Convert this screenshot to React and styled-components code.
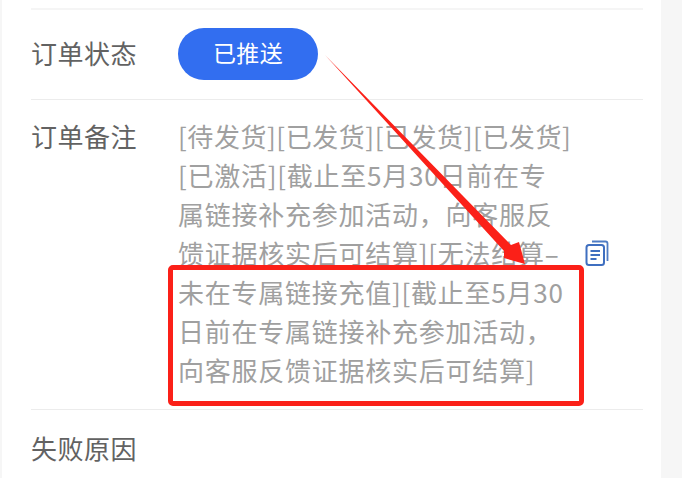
import styled, { createGlobalStyle } from "styled-components";

const GlobalStyle = createGlobalStyle`
    html, body {
        margin: 0;
        padding: 0;
        background-color: #f6f6f6;
    }
`;

export default function App() {
    return (
        <Page>
            <GlobalStyle />
            <Card>
                <TopRule />
                <StatusRow>
                    <Label>订单状态</Label>
                    <StatusPill>已推送</StatusPill>
                </StatusRow>
                <NoteRow>
                    <Label>订单备注</Label>
                    <Note>
                        <NoteLine $tight>[待发货][已发货][已发货][已发货]</NoteLine>
                        <NoteLine>[已激活][截止至5月30日前在专</NoteLine>
                        <NoteLine>属链接补充参加活动，向客服反</NoteLine>
                        <NoteLine>
                            馈证据核实后可结算][无法结算–
                            <CopyIcon viewBox="0 0 24 26" aria-hidden="true">
                                <path d="M7 1.5h13.5a2 2 0 0 1 2 2V21" fill="none" stroke="#4f7cc4" strokeWidth="1.8" />
                                <rect x="1.5" y="5" width="17.5" height="20" rx="2.5" fill="none" stroke="#3f6fc0" strokeWidth="2" />
                                <path d="M5.5 11h9.5M5.5 15h9.5M5.5 19h6" fill="none" stroke="#3f6fc0" strokeWidth="1.8" />
                            </CopyIcon>
                        </NoteLine>
                        <Highlighted>
                            <NoteLine>未在专属链接充值][截止至5月30</NoteLine>
                            <NoteLine>日前在专属链接补充参加活动，</NoteLine>
                            <NoteLine>向客服反馈证据核实后可结算]</NoteLine>
                        </Highlighted>
                    </Note>
                </NoteRow>
                <ReasonRow>
                    <Label>失败原因</Label>
                </ReasonRow>
            </Card>
            <Arrow viewBox="0 0 682 478" aria-hidden="true">
                <polygon points="325,55 511,245 519,242 525,264 504,258 504,251" fill="#fb2018" />
            </Arrow>
        </Page>
    );
}

const Page = styled.div`
    position: relative;
    height: 478px;
    width: 682px;
    overflow: hidden;
    background-color: #f6f6f6;
    font-family: "Noto Sans CJK SC", "Liberation Sans", sans-serif;
`;

const Card = styled.main`
    box-sizing: border-box;
    height: 478px;
    width: 659px;
    margin-left: 2px;
    padding: 0 18px 0 29px;
    background-color: #ffffff;
`;

const TopRule = styled.div`
    height: 8px;
    border-bottom: 2px solid #f5f5f5;
`;

const Row = styled.section`
    display: flex;
    box-sizing: border-box;
    border-bottom: 1px solid #ececec;
`;

const StatusRow = styled(Row)`
    align-items: center;
    height: 90px;
`;

const NoteRow = styled(Row)`
    align-items: flex-start;
    height: 310px;
    padding-top: 16px;
`;

const ReasonRow = styled.section`
    display: flex;
    align-items: center;
    height: 78px;
`;

const Label = styled.span`
    flex: 0 0 147px;
    padding-bottom: 4px;
    font-size: 26px;
    line-height: 39px;
    letter-spacing: 0.5px;
    color: #626262;
`;

const StatusPill = styled.span`
    display: flex;
    align-items: center;
    justify-content: center;
    box-sizing: border-box;
    height: 52px;
    width: 140px;
    margin-bottom: 2px;
    padding-bottom: 3px;
    border-radius: 26px;
    background-color: #326ef0;
    font-size: 23px;
    letter-spacing: 0.3px;
    color: #ffffff;
`;

const Note = styled.div`
    display: flex;
    flex-direction: column;
    font-size: 26px;
    color: #a0a0a0;
`;

const NoteLine = styled.div`
    display: flex;
    align-items: center;
    height: 39px;
    white-space: nowrap;
    letter-spacing: ${props => props.$tight ? "0.55px" : "0.75px"};
`;

const Highlighted = styled.div`
    position: relative;

    &::after {
        content: "";
        position: absolute;
        top: -7px;
        left: -10px;
        height: 141px;
        width: 416px;
        box-sizing: border-box;
        border: 5px solid #fb2018;
        border-radius: 5px;
    }
`;

const CopyIcon = styled.svg`
    flex: none;
    height: 26px;
    width: 24px;
    margin-left: 25px;
`;

const Arrow = styled.svg`
    position: absolute;
    top: 0;
    left: 0;
    height: 478px;
    width: 682px;
    pointer-events: none;
`;
